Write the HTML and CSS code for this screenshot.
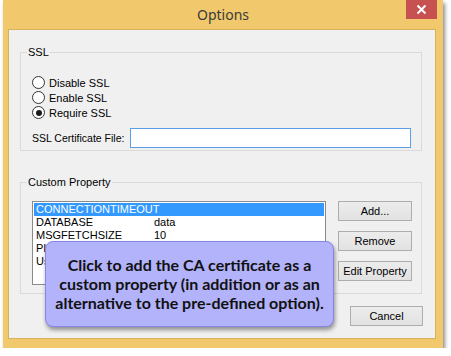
FILE: index.html
```html
<!DOCTYPE html>
<html lang="en">
<head>
  <meta charset="UTF-8">
  <title>Options</title>
  <link rel="stylesheet" href="styles.css">
</head>
<body>
  <div class="window">
    <div class="titlebar">
      <span class="title">Options</span>
      <span class="close">
        <svg width="31" height="19" viewBox="0 0 31 19">
          <path d="M11.5 5.5 L19.5 13.5 M19.5 5.5 L11.5 13.5" stroke="#fff" stroke-width="2"/>
        </svg>
      </span>
    </div>

    <div class="client">
      <fieldset class="group ssl">
        <legend>SSL</legend>
        <div class="group-body">
          <label class="radio"><span class="dot"></span>Disable SSL</label>
          <label class="radio"><span class="dot"></span>Enable SSL</label>
          <label class="radio"><span class="dot checked"></span>Require SSL</label>
          <div class="cert-row">
            <span class="cert-label">SSL Certificate File:</span>
            <span class="textbox"></span>
          </div>
        </div>
      </fieldset>

      <fieldset class="group custom">
        <legend>Custom Property</legend>
        <div class="group-body custom-body">
          <div class="listbox">
            <div class="row selected"><span class="key">CONNECTIONTIMEOUT</span><span class="val"></span></div>
            <div class="row"><span class="key">DATABASE</span><span class="val">data</span></div>
            <div class="row"><span class="key">MSGFETCHSIZE</span><span class="val">10</span></div>
            <div class="row"><span class="key">PI</span></div>
            <div class="row"><span class="key">Us</span></div>
          </div>
          <div class="btn-col">
            <button class="btn">Add...</button>
            <button class="btn">Remove</button>
            <button class="btn">Edit Property</button>
          </div>
        </div>
      </fieldset>

      <div class="footer">
        <button class="btn cancel">Cancel</button>
      </div>

      <div class="callout">
        Click to add the CA certificate as a<br>
        custom property (in addition or as an<br>
        alternative to the pre-defined option).
      </div>
    </div>
  </div>
</body>
</html>
```

FILE: styles.css
```css
body {
  margin: 0;
  background: #fff;
  font-family: 'Liberation Sans', Arial, sans-serif;
  font-size: 11px;
  color: #000;
}

.window {
  box-sizing: border-box;
  width: 440px;
  height: 348px;
  margin-left: 3px;
  padding: 0 7px 9px 5px;
  background: #f1c96c;
  box-shadow: 2px 3px 4px rgba(0, 0, 0, 0.45);
  display: flex;
  flex-direction: column;
}

.titlebar {
  height: 29px;
  display: flex;
  align-items: flex-start;
}

.title {
  flex: 1;
  text-align: center;
  padding-left: 37px;
  margin-left: -5px;
  font-family: 'Noto Sans', sans-serif;
  font-size: 14px;
  line-height: 30px;
  color: #3a3a3a;
}

.close {
  width: 31px;
  height: 19px;
  margin-right: -1px;
  background: #c75050;
  display: block;
}

.close svg {
  display: block;
}

.client {
  position: relative;
  flex: 1;
  background: #f0f0f0;
  border: 1px solid #d6b25f;
  padding: 0 13px 0 11px;
}

.group {
  margin: 0;
  padding: 0;
  border: 1px solid #dadada;
  min-width: 0;
}

.group legend {
  margin-left: 6px;
  padding: 0 1px;
  line-height: 14px;
}

.ssl {
  margin-top: 15px;
}

.custom {
  margin-top: 24px;
}

.ssl .group-body {
  padding: 16px 10px 2px 11px;
}

.radio {
  display: flex;
  align-items: center;
  height: 15px;
  gap: 4px;
}

.dot {
  box-sizing: border-box;
  width: 13px;
  height: 13px;
  border: 1px solid #333;
  border-radius: 50%;
  background: #fff;
  position: relative;
}

.dot.checked::after {
  content: '';
  position: absolute;
  left: 2.5px;
  top: 2.5px;
  width: 6px;
  height: 6px;
  border-radius: 50%;
  background: #1a1a1a;
}

.cert-row {
  display: flex;
  align-items: center;
  margin-top: 8px;
}

.cert-label {
  width: 98px;
  font-size: 10.5px;
}

.textbox {
  box-sizing: border-box;
  width: 281px;
  height: 20px;
  background: #fff;
  border: 1px solid #5b9fe6;
}

.custom-body {
  display: flex;
  padding: 12px 9px 8px 11px;
}

.listbox {
  box-sizing: border-box;
  width: 294px;
  height: 84px;
  background: #fff;
  border: 1px solid #8a8a8a;
  padding: 1px;
}

.row {
  display: flex;
  height: 13px;
  line-height: 13px;
  padding-left: 2px;
}

.row .key {
  width: 118px;
}

.row.selected {
  background: #3399ff;
  color: #fff;
}

.btn-col {
  margin-left: 12px;
  display: flex;
  flex-direction: column;
  gap: 10px;
}

.btn {
  box-sizing: border-box;
  width: 74px;
  height: 20px;
  padding: 0;
  font-family: 'Liberation Sans', Arial, sans-serif;
  font-size: 11px;
  color: #000;
  background: linear-gradient(#ececec, #e2e2e2);
  border: 1px solid #adadad;
}

.footer {
  display: flex;
  justify-content: flex-end;
  margin-top: 12px;
  margin-right: -1px;
}

.cancel {
  width: 73px;
}

/* tooltip bubble over the dialog */
.callout {
  position: absolute;
  left: 36px;
  top: 211px;
  box-sizing: border-box;
  width: 289px;
  height: 86px;
  padding-top: 13px;
  background: #b3b3fb;
  border: 1px solid #8585ea;
  border-radius: 8px;
  box-shadow: 1px 3px 4px rgba(0, 0, 0, 0.4);
  font-family: Lato, sans-serif;
  font-weight: bold;
  font-size: 16px;
  line-height: 19px;
  text-align: center;
  color: #111;
}
```
